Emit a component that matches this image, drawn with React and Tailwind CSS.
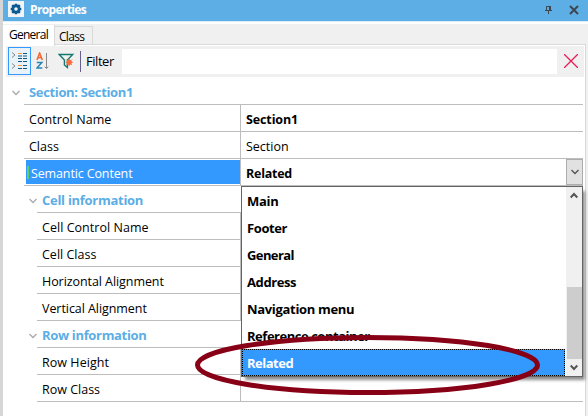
import React from "react";

function Chevron({ className }) {
  return (
    <svg className={className} width="8" height="6" viewBox="0 0 8 6" fill="none" stroke="currentColor" strokeWidth="1.4">
      <path d="M0.5 1L4 4.5L7.5 1" />
    </svg>
  );
}

function GroupRow({ title, nested, className = "" }) {
  return (
    <div className={`flex h-[27px] shrink-0 ${nested ? "pl-[29px]" : "pl-[12px]"}`}>
      <Chevron className={`mt-[12px] shrink-0 text-[#a9adb2] ${nested ? "" : "mr-[4px]"}`} />
      <div className={`flex-1 border-b border-[#bdbdbd] pl-[5px] text-[13px] font-bold leading-[28px] text-[#5caee5] ${className}`}>
        {title}
      </div>
    </div>
  );
}

function PropertyRow({ name, value, nested, selected, bold, nameClass = "", valueClass = "", children }) {
  return (
    <div className={`flex h-[27px] shrink-0 ${nested ? "pl-[37px]" : "pl-[24px]"}`}>
      <div className={`flex border-b border-[#bdbdbd] ${nested ? "w-[203px]" : "w-[216px]"}`}>
        {selected ? (
          <div className="mb-px ml-[2px] mt-px flex flex-1 items-start bg-[#3399ff] text-white">
            <span className="ml-px mt-[6px] h-[13px] w-[2px] bg-[#5fd068]" />
            <span className={`ml-[2px] leading-[28px] ${nameClass}`}>{name}</span>
          </div>
        ) : (
          <span className={`pl-[5px] leading-[30px] ${nameClass}`}>{name}</span>
        )}
      </div>
      <div className="-mt-px flex h-[28px] flex-1 border-b border-l border-[#bdbdbd]">
        <span className={`flex-1 pl-[5px] leading-[32px] ${bold ? "font-bold" : ""} ${valueClass}`}>{value}</span>
        {children}
      </div>
    </div>
  );
}

const options = [
  ["Main", "tracking-[-0.3px]"],
  ["Footer", "tracking-[-0.4px]"],
  ["General", "tracking-[-0.6px]"],
  ["Address", "tracking-[-0.4px]"],
  ["Navigation menu", "tracking-[-0.32px]"],
  ["Reference container", "tracking-[-0.47px]"],
  ["Related", "tracking-[-0.5px]"],
];

function Dropdown() {
  return (
    <div className="absolute left-[241px] top-[186px] flex h-[191px] w-[342px] border border-[#646464] bg-white shadow-[3px_4px_3px_-1px_rgba(0,0,0,0.45)]">
      <div className="flex-1">
        {options.map(([label, cls], i) => (
          <div
            key={label}
            className={`h-[27px] text-[13px] font-bold ${cls} ${
              i === 6
                ? "mr-px border border-dotted border-black bg-[#3399ff] pl-[4px] leading-[26px] text-white"
                : "pl-[5px] leading-[28px]"
            }`}
          >
            {label}
          </div>
        ))}
      </div>
      <div className="flex w-[16px] flex-col items-center bg-[#f0f0f0]">
        <svg className="mt-[5px]" width="8" height="7" viewBox="0 0 8 7" fill="none" stroke="#555" strokeWidth="2">
          <path d="M0.7 5.5L4 2L7.3 5.5" />
        </svg>
        <div className="mt-[88px] h-[72px] w-[15px] bg-[#cdcdcd]" />
        <svg className="mt-[5px]" width="8" height="7" viewBox="0 0 8 7" fill="none" stroke="#555" strokeWidth="2">
          <path d="M0.7 1.5L4 5L7.3 1.5" />
        </svg>
      </div>
    </div>
  );
}

function Gear() {
  return (
    <svg width="16" height="16" viewBox="0 0 16 16" className="bg-[#f3f4f6]" fill="none">
      <g stroke="#0b5a92" strokeWidth="2.6">
        <path d="M8 2.7V13.3M2.7 8H13.3M4.2 4.2L11.8 11.8M11.8 4.2L4.2 11.8" />
      </g>
      <circle cx="8" cy="8" r="3.1" fill="#f3f4f6" stroke="#0b5a92" strokeWidth="2.6" />
    </svg>
  );
}

function Toolbar() {
  return (
    <div className="mr-px flex h-[31px] shrink-0 bg-[#f0f0f0] ml-[3px] mt-px">
      <div className="ml-[2px] mt-px h-[28px] w-[23px] border border-[#3399ff] bg-[#e9f1f9]">
        <svg width="21" height="26" viewBox="0 0 21 26" fill="none">
          <path d="M3 4.5L6 7L3 9.5M3 15.5L6 18L3 20.5" stroke="#888" />
          <path d="M9 5.5H13M9 17.5H13" stroke="#ff9a3c" />
          <path d="M14 5.5H18M9 8H13M14 8H18M9 10.5H13M14 10.5H18M9 13.5H13M14 13.5H18M14 17.5H18M9 20.5H13M14 20.5H18" stroke="#0b5a85" strokeWidth="1.2" />
        </svg>
      </div>
      <svg className="ml-[5px] mt-[6px]" width="13" height="18" viewBox="0 0 13 18" fill="none">
        <path d="M1 8L3.6 1L6.3 8M2 5.6H5.3" stroke="#f26b3a" strokeWidth="1.6" />
        <path d="M0.8 10.6H5.8L1 16H6.3" stroke="#2b84b5" strokeWidth="1.5" />
        <path d="M10.5 1V16.5M8.7 14.7L10.5 16.5L12.3 14.7" stroke="#888" />
      </svg>
      <svg className="ml-[9px] mt-[7px]" width="17" height="17" viewBox="0 0 17 17" fill="none">
        <path d="M1.3 1.5H14.7L9.4 7V14.5L6.4 12V7Z" stroke="#16796f" strokeWidth="1.4" />
        <circle cx="11.2" cy="9.3" r="2.6" fill="#ff6b3a" />
        <path d="M11.2 5.5V13M7.6 9.3H14.8M8.6 6.7L13.8 11.9M13.8 6.7L8.6 11.9" stroke="#ff6b3a" />
      </svg>
      <div className="ml-[5px] mt-[5px] h-[21px] w-px bg-[#66608f]" />
      <span className="ml-[5px] w-[36px] text-[13px] leading-[31px] tracking-[-0.45px]">Filter</span>
      <div className="mt-[3px] h-[25px] w-[435px] bg-white" />
      <svg className="ml-[7px] mt-[8px]" width="14" height="14" viewBox="0 0 14 14" stroke="#e91e56" strokeWidth="1.3">
        <path d="M0 0L14 14M14 0L0 14" />
      </svg>
    </div>
  );
}

export default function App() {
  return (
    <div className="relative flex h-[416px] w-[588px] flex-col overflow-hidden border-l-[3px] border-[#d6d6d6] bg-[#f0f0f0] font-['Open_Sans','Noto_Sans',sans-serif] text-[12.5px] text-black">
      <div className="-ml-px flex h-[21px] shrink-0 bg-[#5caee5]">
        <div className="ml-[6px] mt-px h-[16px] w-[16px]"><Gear /></div>
        <span className="ml-[6px] flex-1 text-[12px] font-bold leading-[20px] tracking-[-0.65px] text-white">Properties</span>
        <svg className="mr-[16px] mt-[5px]" width="8" height="10" viewBox="0 0 8 10" fill="none" stroke="#3e4650">
          <path d="M1.5 5V1.5H5.5V5" strokeWidth="1" />
          <path d="M5 1V5" strokeWidth="2" />
          <path d="M0 5.5H7M3.5 5.5V9" />
        </svg>
        <svg className="mr-[9px] mt-[5px]" width="10" height="10" viewBox="0 0 10 10" stroke="#3e4650" strokeWidth="2">
          <path d="M1 1L9 9M9 1L1 9" />
        </svg>
      </div>
      <div className="h-[3px] shrink-0 border-t border-[#dcebf6] bg-white" />
      <div className="relative z-10 flex h-[21px] shrink-0 items-end text-[12px]">
        <div className="-mb-px h-[21px] w-[52px] border-r border-[#d9d9d9] bg-white pl-[6px] leading-[19px] tracking-[-0.75px]">General</div>
        <div className="h-[19px] w-[38px] border-r border-t border-[#d9d9d9] pl-[4px] leading-[19px] tracking-[-0.7px]">Class</div>
      </div>
      <div className="mr-[2px] -mt-px flex flex-1 flex-col border-r border-t border-[#d9d9d9] bg-white">
        <Toolbar />
        <div className="mr-[2px] mt-px flex flex-1 flex-col -ml-[3px]">
          <GroupRow title="Section: Section1" className="tracking-[-0.35px]" />
          <PropertyRow name="Control Name" value="Section1" bold nameClass="tracking-[0.08px]" valueClass="tracking-[-0.12px]" />
          <PropertyRow name="Class" value="Section" />
          <PropertyRow name="Semantic Content" value="Related" selected bold nameClass="tracking-[-0.13px]" valueClass="tracking-[-0.25px]">
            <div className="mt-px flex h-[26px] w-[17px] items-center justify-center border border-[#adadad] bg-[#e1e1e1]">
              <Chevron className="text-[#555]" />
            </div>
          </PropertyRow>
          <GroupRow title="Cell information" nested className="tracking-[-0.28px]" />
          <PropertyRow name="Cell Control Name" nested nameClass="tracking-[0.04px]" />
          <PropertyRow name="Cell Class" nested />
          <PropertyRow name="Horizontal Alignment" nested nameClass="tracking-[-0.07px]" />
          <PropertyRow name="Vertical Alignment" nested nameClass="tracking-[-0.06px]" />
          <GroupRow title="Row information" nested className="tracking-[-0.33px]" />
          <PropertyRow name="Row Height" nested nameClass="tracking-[0.05px]" />
          <PropertyRow name="Row Class" nested />
        </div>
      </div>
      <div className="absolute -left-[3px] top-0"><Dropdown /></div>
      <svg className="pointer-events-none absolute -left-[3px] top-0" width="588" height="416" fill="none">
        <ellipse cx="367.5" cy="365" rx="170" ry="27.5" stroke="#880015" strokeWidth="5" />
      </svg>
    </div>
  );
}
